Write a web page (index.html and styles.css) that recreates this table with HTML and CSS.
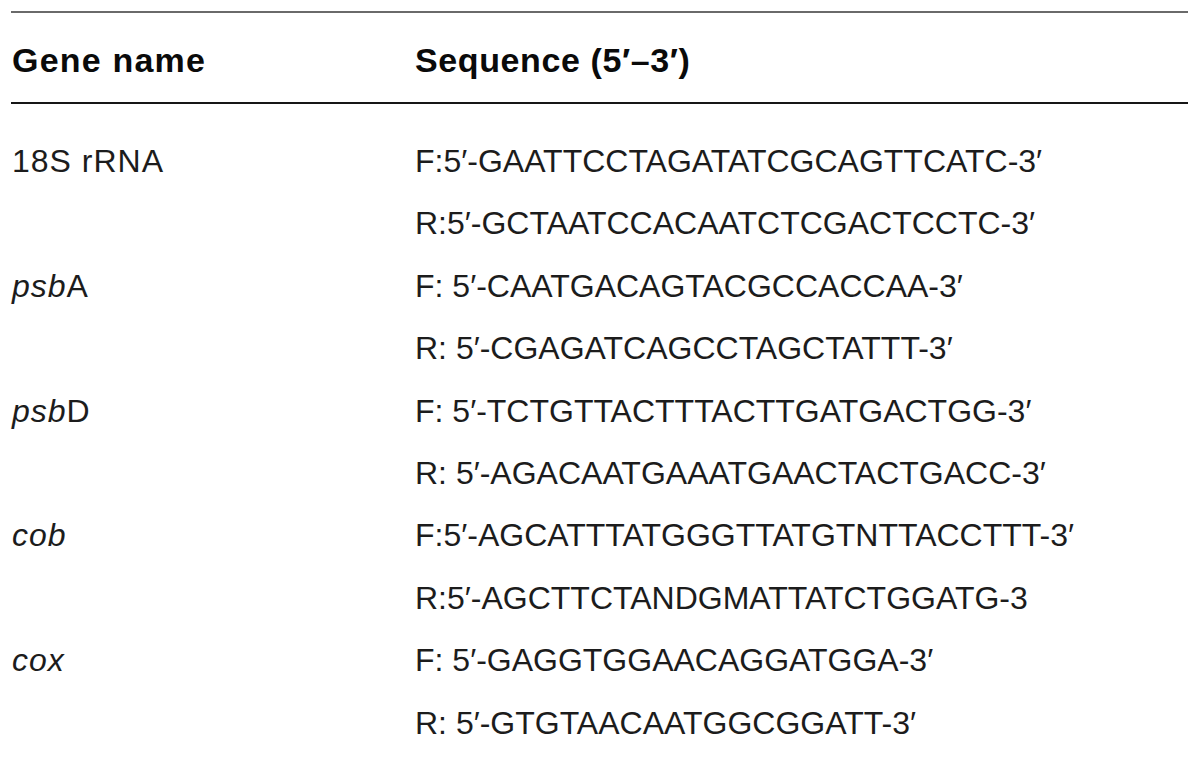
FILE: index.html
```html
<!DOCTYPE html>
<html lang="en">
<head>
<meta charset="utf-8">
<title>Primer sequences</title>
<link rel="stylesheet" href="styles.css">
</head>
<body>
<div class="table">
  <div class="head">
    <div class="cell name">Gene name</div>
    <div class="cell">Sequence (5′–3′)</div>
  </div>
  <div class="body">
    <div class="cell name">18S rRNA</div>
    <div class="cell">F:5′-GAATTCCTAGATATCGCAGTTCATC-3′</div>
    <div class="cell name"></div>
    <div class="cell">R:5′-GCTAATCCACAATCTCGACTCCTC-3′</div>
    <div class="cell name"><i>psb</i>A</div>
    <div class="cell">F: 5′-CAATGACAGTACGCCACCAA-3′</div>
    <div class="cell name"></div>
    <div class="cell">R: 5′-CGAGATCAGCCTAGCTATTT-3′</div>
    <div class="cell name"><i>psb</i>D</div>
    <div class="cell">F: 5′-TCTGTTACTTTACTTGATGACTGG-3′</div>
    <div class="cell name"></div>
    <div class="cell">R: 5′-AGACAATGAAATGAACTACTGACC-3′</div>
    <div class="cell name"><i>cob</i></div>
    <div class="cell">F:5′-AGCATTTATGGGTTATGTNTTACCTTT-3′</div>
    <div class="cell name"></div>
    <div class="cell">R:5′-AGCTTCTANDGMATTATCTGGATG-3</div>
    <div class="cell name"><i>cox</i></div>
    <div class="cell">F: 5′-GAGGTGGAACAGGATGGA-3′</div>
    <div class="cell name"></div>
    <div class="cell">R: 5′-GTGTAACAATGGCGGATT-3′</div>
  </div>
</div>
</body>
</html>
```

FILE: styles.css
```css
html, body {
  margin: 0;
  padding: 0;
  background: #ffffff;
}

body {
  font-family: "Liberation Sans", Arial, Helvetica, sans-serif;
  color: #1c1c1c;
}

.table {
  margin: 11px 0 0 11px;
  width: 1177px;
  border-top: 2px solid #6a6a6a;
}

.head {
  display: grid;
  grid-template-columns: 403px 1fr;
  padding: 27px 0 22px;
  border-bottom: 2px solid #161616;
  font-size: 34px;
  font-weight: bold;
  line-height: 40px;
  letter-spacing: 0.6px;
  color: #0a0a0a;
}

.head .cell {
  padding-left: 1px;
}

.head .name {
  letter-spacing: 1.2px;
}

.body {
  display: grid;
  grid-template-columns: 403px 1fr;
  grid-auto-rows: 62.4px;
  padding-top: 26px;
  font-size: 32px;
  line-height: 62.4px;
}

.body .cell {
  padding-left: 1px;
  white-space: nowrap;
}

.body .name {
  letter-spacing: 1px;
}

.body i {
  font-style: italic;
}
```
